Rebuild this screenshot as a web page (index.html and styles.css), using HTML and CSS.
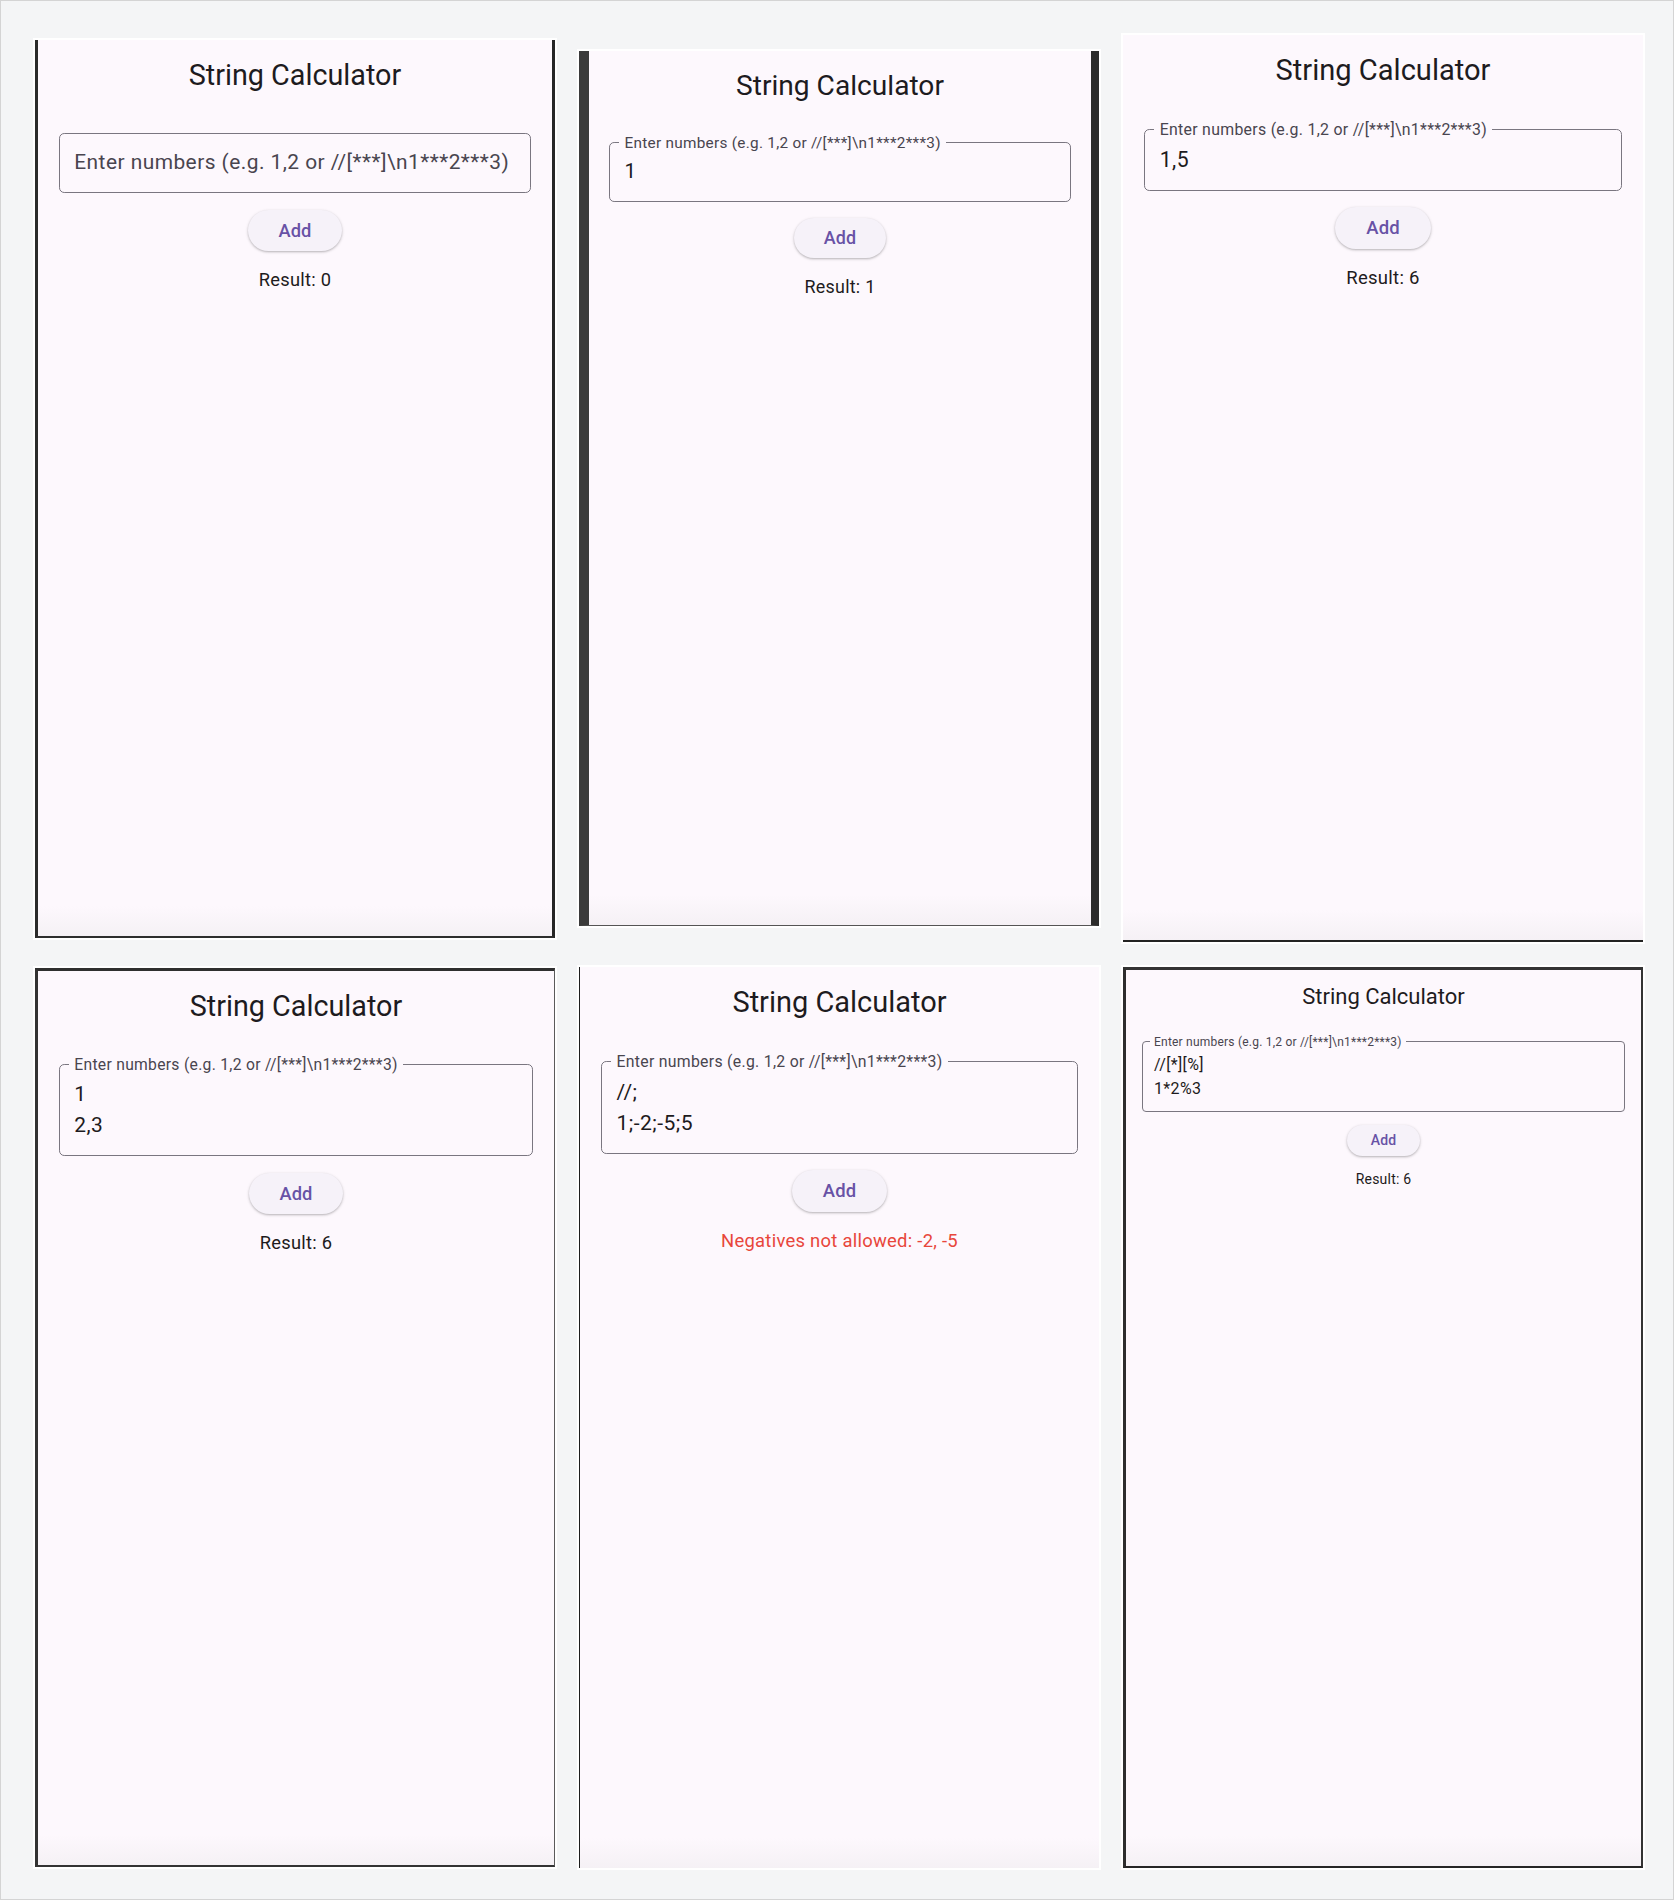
FILE: index.html
```html
<!DOCTYPE html>
<html lang="en">
<head>
<meta charset="utf-8">
<title>String Calculator screenshots</title>
<link rel="stylesheet" href="styles.css">
</head>
<body>
<div class="page">
  <div class="grid">
    <div class="frame">
      <div class="screen s1">
        <h1 class="title">String Calculator</h1>
        <div class="field"><span class="placeholder">Enter numbers (e.g. 1,2 or //[***]\n1***2***3)</span></div>
        <button class="add">Add</button>
        <p class="result">Result: 0</p>
      </div>
    </div>
    <div class="frame">
      <div class="screen s2">
        <h1 class="title">String Calculator</h1>
        <div class="field"><span class="label">Enter numbers (e.g. 1,2 or //[***]\n1***2***3)</span><div class="value">1</div></div>
        <button class="add">Add</button>
        <p class="result">Result: 1</p>
      </div>
    </div>
    <div class="frame">
      <div class="screen s3">
        <h1 class="title">String Calculator</h1>
        <div class="field"><span class="label">Enter numbers (e.g. 1,2 or //[***]\n1***2***3)</span><div class="value">1,5</div></div>
        <button class="add">Add</button>
        <p class="result">Result: 6</p>
      </div>
    </div>
    <div class="frame">
      <div class="screen s4">
        <h1 class="title">String Calculator</h1>
        <div class="field"><span class="label">Enter numbers (e.g. 1,2 or //[***]\n1***2***3)</span><div class="value">1<br>2,3</div></div>
        <button class="add">Add</button>
        <p class="result">Result: 6</p>
      </div>
    </div>
    <div class="frame">
      <div class="screen s5">
        <h1 class="title">String Calculator</h1>
        <div class="field"><span class="label">Enter numbers (e.g. 1,2 or //[***]\n1***2***3)</span><div class="value">//;<br>1;-2;-5;5</div></div>
        <button class="add">Add</button>
        <p class="result error">Negatives not allowed: -2, -5</p>
      </div>
    </div>
    <div class="frame">
      <div class="screen s6">
        <h1 class="title">String Calculator</h1>
        <div class="field"><span class="label">Enter numbers (e.g. 1,2 or //[***]\n1***2***3)</span><div class="value">//[*][%]<br>1*2%3</div></div>
        <button class="add">Add</button>
        <p class="result">Result: 6</p>
      </div>
    </div>
  </div>
</div>
</body>
</html>
```
FILE: styles.css
```css
* { box-sizing: border-box; }
html, body { margin: 0; padding: 0; }
body {
  background: #f4f5f6;
  font-family: Roboto, "Noto Sans", "Liberation Sans", sans-serif;
}
.page {
  width: 1674px;
  height: 1900px;
  border: 1px solid #d4d4d4;
  background: #f4f5f6;
  padding: 32px 0 0 32px;
}
.grid {
  display: grid;
  grid-template-columns: repeat(3, 524px);
  grid-template-rows: 911px 905px;
  column-gap: 20px;
  row-gap: 21px;
  align-items: center;
}
.frame {
  background: #ffffff;
  padding: 2px;
}
.screen {
  --s: 1.3;
  --surface: #fdf8fd;
  display: flex;
  flex-direction: column;
  align-items: center;
  padding: calc(13.2px * var(--s)) calc(16px * var(--s)) 0;
  background: linear-gradient(180deg, #fdf8fd 0, #fdf8fd calc(100% - 30px), #f5f1f5 100%);
  border: 0 solid #2a2a2a;
  overflow: hidden;
}
.s1 { --s: 1.307; height: 898px; border-left: 3px solid #2b2b2b; border-right: 3px solid #262626; border-bottom: 2px solid #2e2e2e; }
.s2 { --s: 1.279; height: 875px; border-left: 10px solid #3b3b3b; border-right: 8px solid #2c2c2c; border-bottom: 1px solid #555555; }
.s3 { --s: 1.322; height: 907px; border-bottom: 2px solid #232323; }
.s4 { --s: 1.307; height: 899px; border-top: 3px solid #2f2f2f; border-left: 3px solid #333333; border-right: 1px solid #5a5a5a; border-bottom: 2px solid #333333; }
.s5 { --s: 1.317; height: 901px; border-left: 1px solid #1e1e1e; }
.s6 { --s: 1; height: 901px; border-top: 3px solid #333333; border-left: 3px solid #2e2e2e; border-right: 2px solid #333333; border-bottom: 2px solid #262626; }

.title {
  margin: 0;
  font-size: calc(22px * var(--s));
  line-height: calc(28px * var(--s));
  font-weight: 400;
  color: #1d1b20;
  white-space: nowrap;
}
.field {
  position: relative;
  align-self: stretch;
  margin-top: calc(30px * var(--s));
  border: 1px solid #7a7680;
  border-radius: calc(4px * var(--s));
  padding: calc(10.5px * var(--s)) calc(11px * var(--s));
  font-size: calc(16px * var(--s));
  line-height: calc(24px * var(--s));
  letter-spacing: calc(0.35px * var(--s));
  color: #1d1b20;
}
.placeholder {
  display: block;
  color: #49454f;
  white-space: nowrap;
}
.value { white-space: nowrap; }
.label {
  position: absolute;
  top: 0;
  left: calc(7px * var(--s));
  transform: translateY(-50%);
  padding: 0 calc(4px * var(--s));
  background: var(--surface);
  font-size: calc(12px * var(--s));
  line-height: calc(16px * var(--s));
  letter-spacing: calc(0.22px * var(--s));
  color: #49454f;
  white-space: nowrap;
}
.add {
  margin-top: calc(12.6px * var(--s));
  height: calc(31.4px * var(--s));
  padding: 0 calc(23.5px * var(--s));
  border: none;
  border-radius: 999px;
  background: #f6f2f9;
  color: #6852a6;
  font-family: inherit;
  font-size: calc(14px * var(--s));
  font-weight: 500;
  letter-spacing: calc(0.1px * var(--s));
  box-shadow: 0 1px 2px rgba(0, 0, 0, 0.2), 0 1px 3px 1px rgba(0, 0, 0, 0.07);
}
.result {
  margin: calc(12.4px * var(--s)) 0 0;
  font-size: calc(14px * var(--s));
  line-height: calc(20px * var(--s));
  letter-spacing: calc(0.2px * var(--s));
  color: #1d1b20;
  white-space: nowrap;
}
.error { color: #e8463b; }
```
